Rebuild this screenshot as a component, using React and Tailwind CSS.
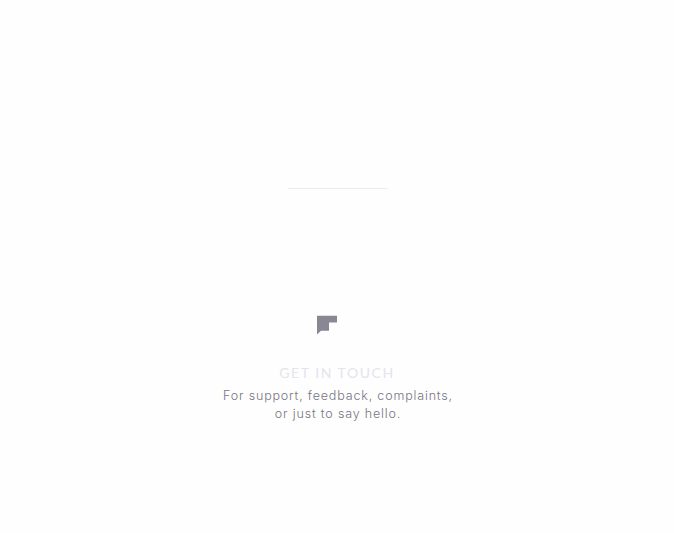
export default function App() {
  return (
    <main className="flex h-[533px] w-full flex-col items-center overflow-hidden bg-[#fefefe] font-['Lato','Liberation_Sans',sans-serif]">
      <hr className="mt-[188px] ml-[2px] h-px w-[100px] border-0 bg-[#ececec]" />
      <section className="mt-[126px] flex flex-col items-center text-center">
        <svg className="mr-5 h-5 w-5" viewBox="0 0 20 20" fill="#898793" aria-hidden="true">
          <path d="M0 .7H20V7.6H12V15.7H4L0 19.6Z" />
        </svg>
        <h2 className="mt-[28px] text-[14px] leading-5 font-normal tracking-[1.55px] text-[#e5e4ea]">
          GET IN TOUCH
        </h2>
        <p className="mt-[4px] ml-[2px] font-['Inter','Liberation_Sans',sans-serif] text-[12.5px] leading-[18px] font-light tracking-[0.83px] text-[#777581]">
          For support, feedback, complaints,
          <br />
          or just to say hello.
        </p>
      </section>
    </main>
  );
}
